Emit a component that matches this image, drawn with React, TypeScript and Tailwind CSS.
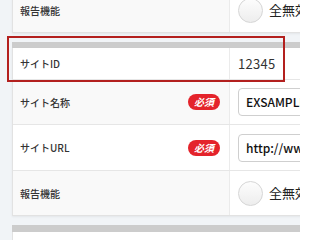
import React from 'react';

function Badge() {
  return (
    <span className="inline-flex items-center justify-center w-[32px] h-[16px] rounded-full bg-[#e4232b] text-white text-[10px] font-bold leading-none italic">
      必須
    </span>
  );
}

function Radio({ label }: { label: string }) {
  return (
    <div className="flex items-center gap-[6px]">
      <span className="w-[25px] h-[25px] rounded-full border border-[#d6d6d6] bg-gradient-to-b from-[#fdfdfd] to-[#ededed] shrink-0" />
      <span className="text-[13px] text-[#222] whitespace-nowrap">{label}</span>
    </div>
  );
}

interface RowProps {
  label: string;
  required?: boolean;
  shade?: boolean;
  height: string;
  last?: boolean;
  children: React.ReactNode;
}

function Row({ label, required, shade, height, last, children }: RowProps) {
  return (
    <div className={`flex ${height} ${last ? '' : 'border-b border-[#e6e6e6]'}`}>
      <div
        className={`w-[217px] shrink-0 flex items-center justify-between pl-[7px] pr-[9px] border-r border-[#ebebeb] ${
          shade ? 'bg-[#f9f9f9]' : 'bg-white'
        }`}
      >
        <span className="text-[10px] text-[#333] font-medium">{label}</span>
        {required && <Badge />}
      </div>
      <div className="flex-1 flex items-center pl-[8px] bg-white">{children}</div>
    </div>
  );
}

function Input({ value }: { value: string }) {
  return (
    <div className="w-[120px] h-[28px] border border-[#cfcfcf] rounded-[4px] bg-white flex items-center pl-[7px] text-[12px] text-[#111] font-medium whitespace-nowrap overflow-hidden">
      {value}
    </div>
  );
}

export default function App() {
  return (
    <div className="relative w-[300px] h-[240px] overflow-hidden bg-[#f1f4f7] pl-[12px] font-['Noto_Sans_CJK_JP',sans-serif]">
      <div className="w-[320px] mt-[-13px] border border-[#e2e2e2] bg-white shadow-[0_1px_2px_rgba(0,0,0,0.06)]">
        <Row label="報告機能" shade height="h-[44px]" last>
          <Radio label="全無効" />
        </Row>
      </div>

      <div className="w-[320px] mt-[9px]">
        <div className="h-[6px] bg-[#cccccc]" />
        <div className="border-x border-b border-[#e2e2e2] bg-white shadow-[0_1px_2px_rgba(0,0,0,0.06)]">
          <Row label="サイトID" height="h-[32px]">
            <span className="text-[13px] text-[#333] tracking-[0.3px]">12345</span>
          </Row>
          <Row label="サイト名称" required shade height="h-[45px]">
            <Input value="EXSAMPLE" />
          </Row>
          <Row label="サイトURL" required height="h-[46px]">
            <Input value="http://www.example.jp" />
          </Row>
          <Row label="報告機能" shade height="h-[44px]" last>
            <Radio label="全無効" />
          </Row>
        </div>
      </div>

      <div className="w-[320px] mt-[9px]">
        <div className="h-[7px] bg-[#cccccc]" />
        <div className="h-[40px] border-x border-[#e2e2e2] bg-white" />
      </div>

      <div className="absolute left-[7px] top-[36px] w-[278px] h-[46px] border-2 border-[#b3201e] pointer-events-none" />
    </div>
  );
}
